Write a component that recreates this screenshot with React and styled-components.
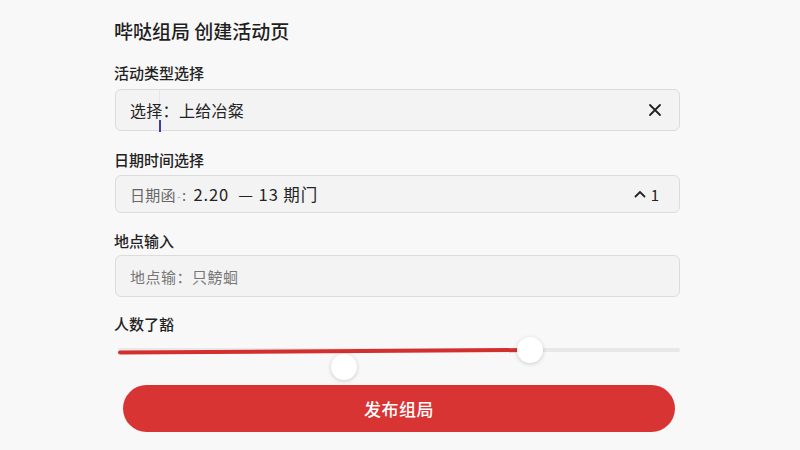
import React from 'react';
import styled, { createGlobalStyle } from 'styled-components';

const GlobalStyle = createGlobalStyle`
  html, body {
    margin: 0;
    padding: 0;
    background: #f8f8f8;
  }
  body {
    font-family: "Noto Sans CJK SC", "Noto Sans", sans-serif;
    color: #222;
  }
`;

const Page = styled.div`
  width: 800px;
  height: 450px;
  overflow: hidden;
  box-sizing: border-box;
  padding: 19px 120px 0 114px;
  display: flex;
  flex-direction: column;
`;

const Title = styled.h1`
  margin: 0 0 20px;
  font-size: 19px;
  line-height: 24px;
  font-weight: 500;
  color: #1e1e1e;
`;

const Label = styled.div`
  font-size: 15px;
  line-height: 20px;
  font-weight: 500;
  color: #222;
  margin-bottom: ${(p) => p.gap}px;
`;

const Field = styled.div`
  position: relative;
  box-sizing: border-box;
  height: ${(p) => p.h}px;
  margin-left: 1px;
  margin-bottom: ${(p) => p.mb}px;
  display: flex;
  align-items: center;
  padding: 0 14px;
  background: #f3f3f3;
  border: 1px solid #dcdcdc;
  border-radius: 6px;
  font-size: 16px;
`;

const Value = styled.span`
  flex: 1;
  color: #222;
  letter-spacing: 0.3px;
`;

const DateText = styled.span`
  font-size: 16.5px;
  letter-spacing: 0.9px;
`;

const Muted = styled.span`
  color: #666;
  font-size: 15px;
  letter-spacing: 0.3px;
  margin-right: 7px;
`;

const Tick = styled.span`
  color: #aaa;
  font-size: 11px;
  margin: 0 1px;
`;

const Placeholder = styled.span`
  flex: 1;
  color: #777;
  font-size: 15px;
  letter-spacing: 0.5px;
`;

const Caret = styled.span`
  position: absolute;
  left: 43px;
  top: 30px;
  width: 1.5px;
  height: 12px;
  background: #3a3fb0;
`;

const Guide = styled.span`
  position: absolute;
  left: 43px;
  top: 0;
  bottom: 0;
  width: 1px;
  background: rgba(0, 0, 0, 0.05);
`;

const Suffix = styled.span`
  display: flex;
  align-items: center;
  gap: 5px;
  font-size: 15px;
  color: #222;
  margin-right: 6px;
`;

const IconButton = styled.span`
  display: flex;
  align-items: center;
  margin-right: 3px;
`;

const Slider = styled.div`
  position: relative;
  height: 51px;
  margin-left: 4px;
`;

const Track = styled.div`
  position: absolute;
  left: 0;
  right: 0;
  top: 14px;
  height: 4px;
  border-radius: 2px;
  background: #e8e8e8;
`;

const Fill = styled.div`
  position: absolute;
  left: 0;
  top: 14px;
  height: 4px;
  border-radius: 2px;
  background: #d32f2f;
  transform: rotate(-0.35deg);
  transform-origin: right center;
`;

const Thumb = styled.div`
  position: absolute;
  width: 26px;
  height: 26px;
  border-radius: 50%;
  background: #fff;
  box-shadow: 0 1px 4px rgba(0, 0, 0, 0.18);
  transform: translate(-50%, -50%);
`;

const Submit = styled.button`
  height: 47px;
  margin: 0 5px 0 9px;
  border: none;
  border-radius: 24px;
  background: #d93434;
  color: #fff;
  font-family: inherit;
  font-size: 17px;
  font-weight: 500;
  letter-spacing: 0.5px;
`;

const App = () => {
  const low = 226;
  const high = 412;

  return (
    <>
      <GlobalStyle />
      <Page>
        <Title>哔哒组局 创建活动页</Title>

        <Label gap={6}>活动类型选择</Label>
        <Field h={42} mb={19}>
          <Guide />
          <Value>选择：上给冶粲</Value>
          <Caret />
          <IconButton>
            <svg width="14" height="14" viewBox="0 0 14 14">
              <path d="M2 2 L12 12 M12 2 L2 12" stroke="#222" strokeWidth="1.8" strokeLinecap="round" />
            </svg>
          </IconButton>
        </Field>

        <Label gap={5}>日期时间选择</Label>
        <Field h={38} mb={18}>
          <Value>
            <Muted>日期函<Tick>-</Tick>:</Muted>
            <DateText>2.20&nbsp;&nbsp;— 13 期门</DateText>
          </Value>
          <Suffix>
            <svg width="12" height="8" viewBox="0 0 12 8">
              <path d="M1.5 6.5 L6 2 L10.5 6.5" fill="none" stroke="#222" strokeWidth="1.8" strokeLinecap="round" />
            </svg>
            1
          </Suffix>
        </Field>

        <Label gap={4}>地点输入</Label>
        <Field h={42} mb={17}>
          <Placeholder>地点输：只鰟蛔</Placeholder>
        </Field>

        <Label gap={0}>人数了豁</Label>
        <Slider>
          <Track />
          <Fill style={{ width: high }} />
          <Thumb style={{ left: high, top: 16 }} />
          <Thumb style={{ left: low, top: 33 }} />
        </Slider>

        <Submit>发布组局</Submit>
      </Page>
    </>
  );
};

export default App;
